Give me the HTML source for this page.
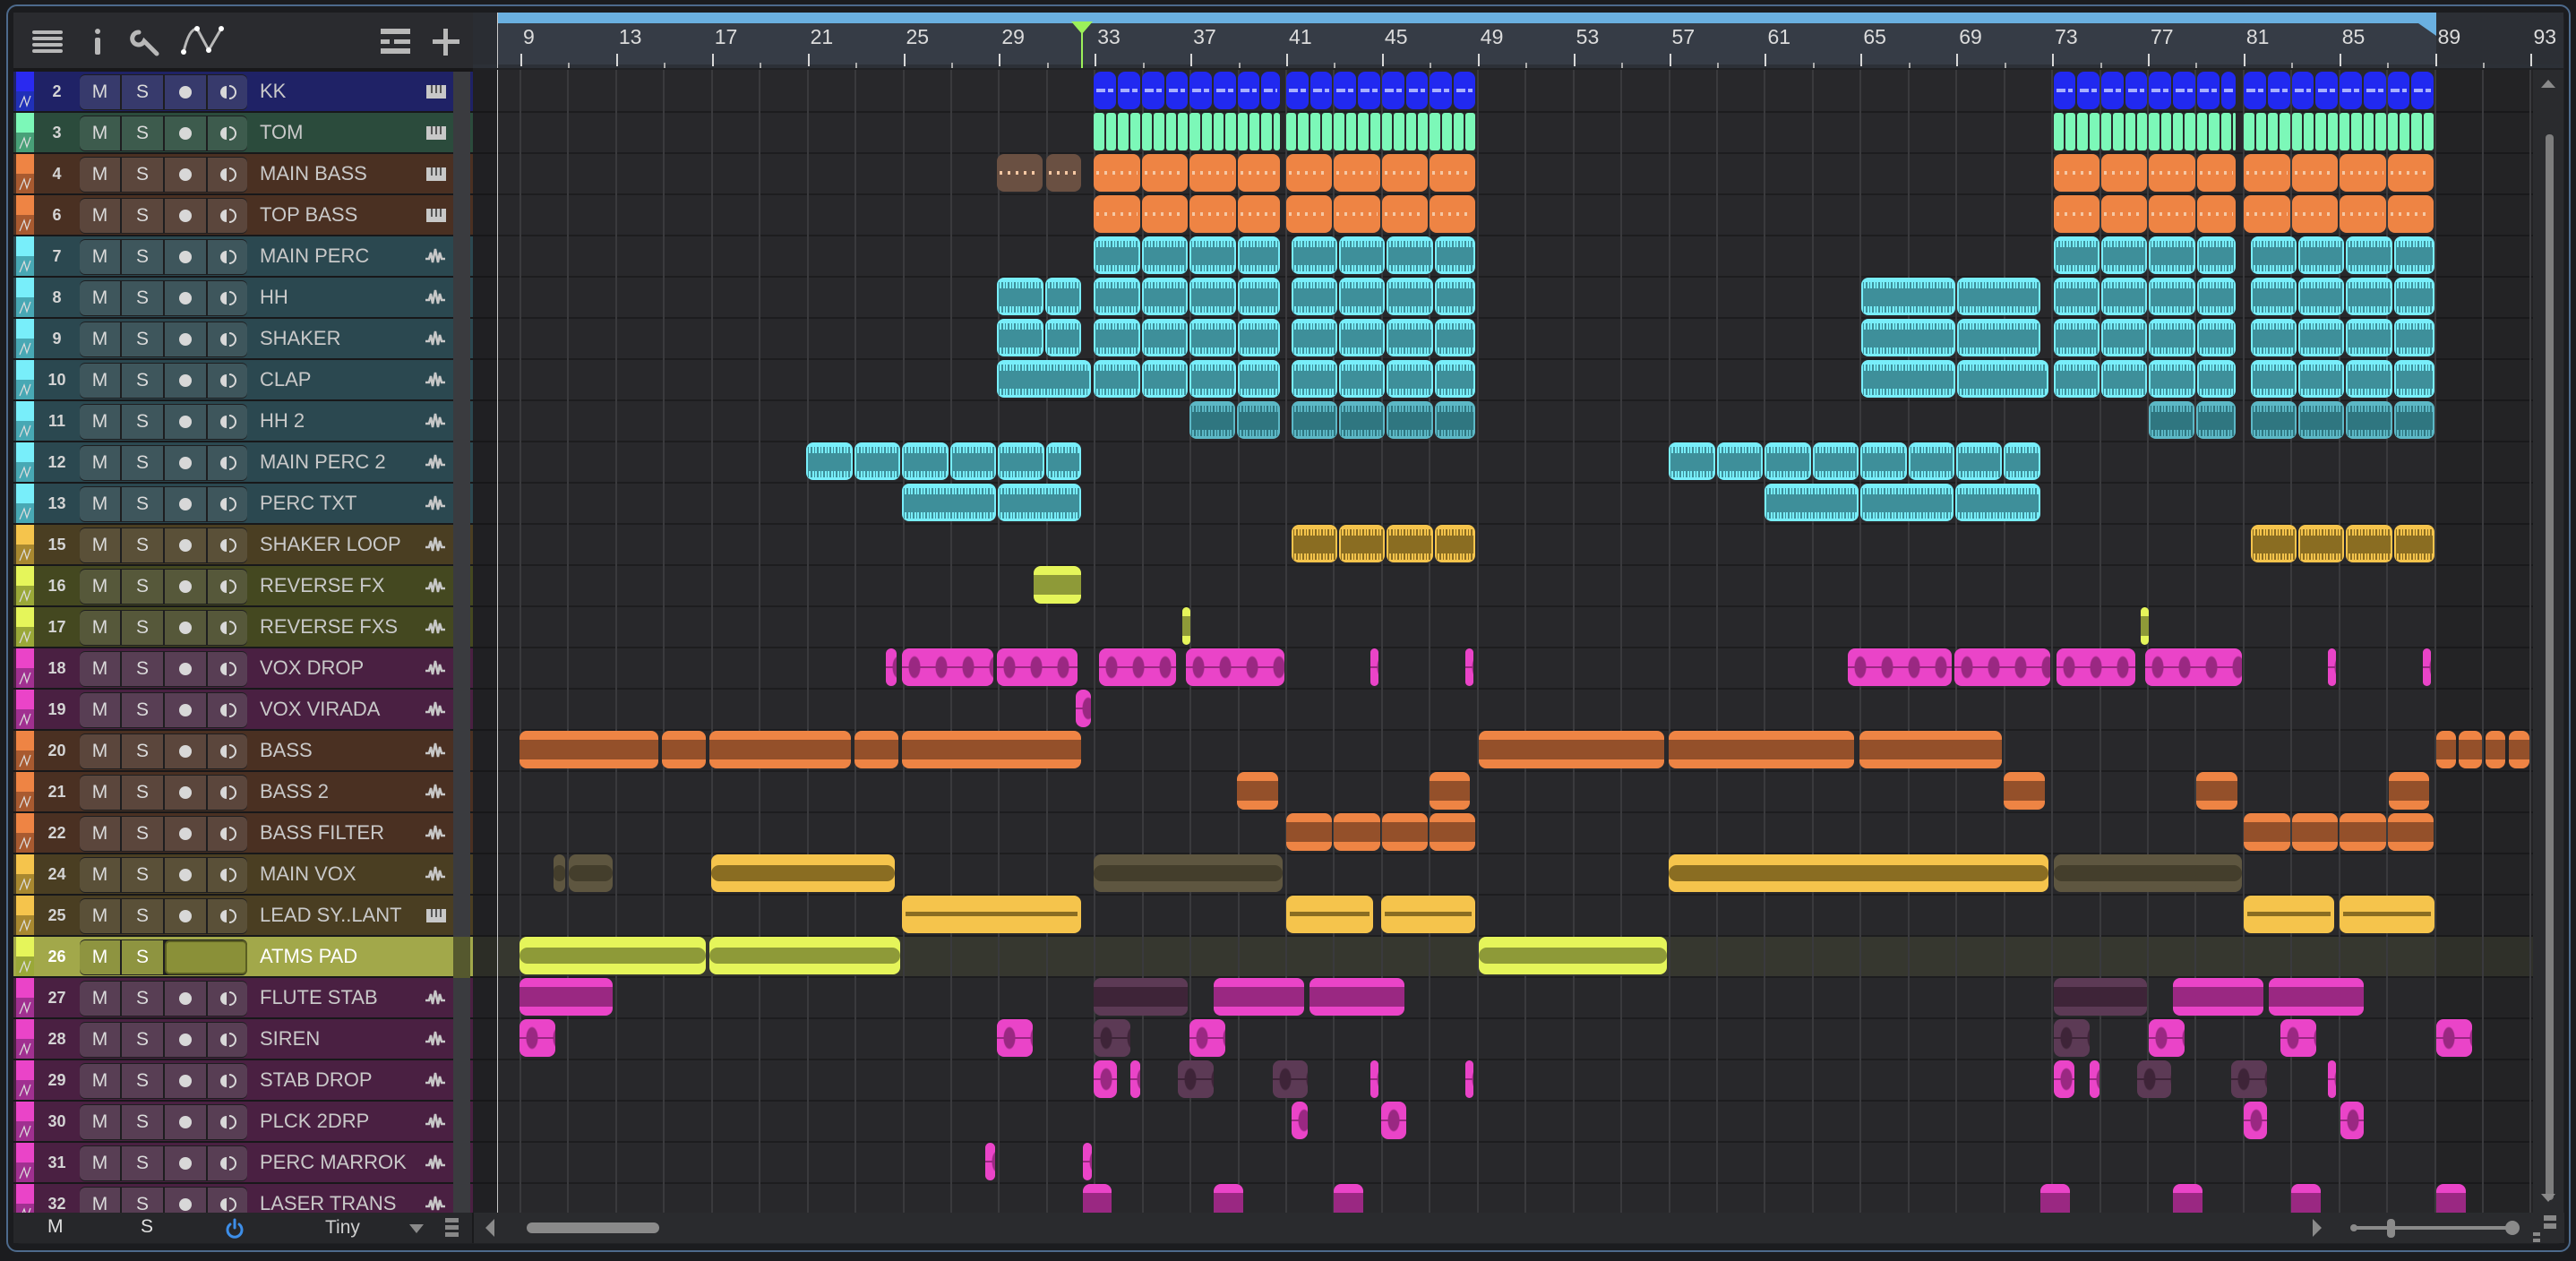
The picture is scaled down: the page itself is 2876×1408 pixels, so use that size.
<!DOCTYPE html>
<html><head><meta charset="utf-8">
<style>
*{margin:0;padding:0;box-sizing:border-box}
body{width:2876px;height:1408px;background:#1b1c1f;position:relative;overflow:hidden;font-family:"Liberation Sans",sans-serif}
.abs{position:absolute}
#frame{left:7px;top:5px;width:2863px;height:1393px;border:2px solid #4d6a8c;border-radius:12px}
#panel{left:15px;top:14px;width:2848px;height:1375px;background:#202124;border-radius:8px;overflow:hidden}
#toolbar{left:15px;top:14px;width:513px;height:62px;background:#2a2b2f}
#ruler{left:528px;top:14px;width:2334px;height:62px;background:#363c46;overflow:hidden}
.rn{position:absolute;top:14px;font-size:23px;color:#dcdcdc}
.tk{position:absolute;width:2px;background:#d8d8d8}
#tl{left:528px;top:78px;width:2300px;height:1276px;background:#28282b;overflow:hidden}
.row{position:absolute;left:0;width:2300px;height:46px;border-bottom:2px solid #1d1d1f}
.gl{position:absolute;top:0;width:2px;height:1276px;background:#3a3a3d}
.clip{position:absolute;height:42px;overflow:hidden}
.lrow{position:absolute;left:15px;width:513px;height:46px;border-bottom:2px solid #18181a}
.lrow div{position:absolute}
.btn{top:4px;height:38px;color:#dadada;font-size:21px;text-align:center;line-height:38px}
.nm{left:261px;top:0;width:230px;height:44px;font-size:22px;color:#c9c9c9;line-height:44px;padding-left:14px;white-space:nowrap}
.num{left:23px;top:0;width:51px;height:44px;font-size:18px;font-weight:bold;color:#d4d4d4;text-align:center;line-height:44px}
#bottom{left:15px;top:1354px;width:2848px;height:34px;background:#2a2b2e}
</style></head><body>
<div id="frame" class="abs"></div>
<div id="panel" class="abs"></div>
<div id="toolbar" class="abs">
 <svg width="513" height="62" class="abs" style="left:0;top:0">
  <g fill="#b8b8b8">
   <rect x="21" y="20" width="34" height="4" rx="2"/><rect x="21" y="27" width="34" height="4" rx="2"/><rect x="21" y="34" width="34" height="4" rx="2"/><rect x="21" y="41" width="34" height="4" rx="2"/>
   <rect x="91" y="18" width="6" height="6" rx="3"/><rect x="91" y="28" width="6" height="19" rx="2"/>
   <rect x="410" y="18" width="33" height="6"/><rect x="410" y="30" width="10" height="5"/><rect x="425" y="30" width="18" height="5"/><rect x="410" y="40" width="33" height="6"/>
   <rect x="468" y="30" width="30" height="5"/><rect x="480" y="18" width="5" height="30"/>
  </g>
  <path d="M140 22 a7 7 0 1 0 6 10 l14 14" stroke="#b8b8b8" stroke-width="5" fill="none" stroke-linecap="round"/>
  <path d="M190 44 Q196 18 205 18 L218 42 L232 18" stroke="#b8b8b8" stroke-width="3" fill="none"/>
  <g fill="#fff"><circle cx="190" cy="44" r="3"/><circle cx="205" cy="18" r="3"/><circle cx="218" cy="42" r="3"/><circle cx="232" cy="18" r="3"/></g>
 </svg>
</div>
<div class="abs" style="left:15px;top:76px;width:513px;height:4px;background:#18181a"></div>
<div id="ruler" class="abs"></div>
<div id="tl" class="abs"></div>
<div id="left"></div>
<div class="abs" style="left:2828px;top:78px;width:34px;height:1276px;background:#2a2b2e"></div>
<svg class="abs" style="left:2828px;top:78px" width="34" height="1276">
 <path d="M9 20 L17 11 L25 20Z" fill="#8a8a8a"/>
 <rect x="14" y="72" width="9" height="1190" rx="4" fill="#7d7d7d"/>
 <path d="M9 1255 L17 1264 L25 1255Z" fill="#8a8a8a"/>
</svg>
<div id="bottom" class="abs">
 <div class="abs" style="left:0;width:512px;height:34px;background:#26272a"></div>
 <div class="abs" style="left:38px;top:4px;font-size:21px;color:#e0e0e0">M</div>
 <div class="abs" style="left:142px;top:4px;font-size:21px;color:#e0e0e0">S</div>
 <svg class="abs" style="left:235px;top:5px" width="24" height="24"><path d="M7 8 A8 8 0 1 0 17 8" stroke="#3d8ee8" stroke-width="3" fill="none" stroke-linecap="round"/><line x1="12" y1="3" x2="12" y2="12" stroke="#3d8ee8" stroke-width="3" stroke-linecap="round"/></svg>
 <div class="abs" style="left:348px;top:5px;font-size:21px;color:#d0d0d0">Tiny</div>
 <svg class="abs" style="left:440px;top:11px" width="20" height="14"><path d="M2 2 L18 2 L10 12Z" fill="#8a8a8a"/></svg>
 <svg class="abs" style="left:482px;top:6px" width="16" height="24"><rect x="0" y="0" width="15" height="5" fill="#888"/><rect x="0" y="8" width="15" height="5" fill="#888"/><rect x="0" y="16" width="15" height="5" fill="#888"/></svg>
 <div class="abs" style="left:512px;width:2px;height:34px;background:#1a1a1c"></div>
 <svg class="abs" style="left:525px;top:6px" width="14" height="22"><path d="M12 1 L2 11 L12 21Z" fill="#8a8a8a"/></svg>
 <div class="abs" style="left:573px;top:11px;width:148px;height:12px;border-radius:6px;background:#8a8a8a"></div>
 <svg class="abs" style="left:2565px;top:6px" width="14" height="22"><path d="M2 1 L12 11 L2 21Z" fill="#8a8a8a"/></svg>
 <svg class="abs" style="left:2605px;top:3px" width="240" height="30">
  <circle cx="8" cy="14" r="4" fill="#8a8a8a"/><rect x="8" y="12" width="180" height="4" fill="#8a8a8a"/>
  <rect x="45" y="4" width="9" height="21" rx="4" fill="#8a8a8a"/><circle cx="185" cy="14" r="8" fill="#8a8a8a"/>
  <rect x="220" y="0" width="14" height="6" fill="#888"/><rect x="220" y="9" width="14" height="6" fill="#888"/>
  <rect x="208" y="19" width="8" height="4" fill="#888"/><rect x="208" y="26" width="8" height="4" fill="#888"/>
 </svg>
</div>
<script>
var S=1.834, BX=581, BW=26.72;
function bx(b){return BX+(b-9)*BW;}
var r=document.getElementById('ruler'),h='';
h+='<div class="abs" style="left:0;top:0;width:27px;height:62px;background:#2a2d33"></div>';
h+='<div class="abs" style="left:'+(2720-528)+'px;top:0;width:200px;height:62px;background:#2c2f35"></div>';
h+='<div class="abs" style="left:27px;top:0;width:'+(2720-555)+'px;height:12px;background:#6ab0e0"></div>';
h+='<svg class="abs" style="left:'+(2720-528-20)+'px;top:12px" width="20" height="14"><path d="M0 0 L20 0 L20 14Z" fill="#6ab0e0"/></svg>';
h+='<div class="abs" style="left:0;top:58px;width:2334px;height:4px;background:#2c3037"></div>';
for(var b=9;b<=95;b+=2){var x=bx(b)-528;if((b-9)%4==0){h+='<div class="tk" style="left:'+x+'px;top:46px;height:14px"></div><div class="rn" style="left:'+(x+3)+'px">'+b+'</div>';}else{h+='<div class="tk" style="left:'+x+'px;top:56px;height:6px;background:#aaa"></div>';}}
h+='<div class="abs" style="left:27px;top:0;width:1px;height:62px;background:#ccc"></div>';
h+='<svg class="abs" style="left:'+(1208-528-12)+'px;top:10px" width="24" height="52"><path d="M0 0 L24 0 L12 14Z" fill="#9cf05a"/><rect x="11" y="6" width="2" height="46" fill="#9cf05a"/></svg>';
r.innerHTML=h;
var rows=[
['2','KK','#2a2af0','#2030b8','#1f2266','#373a6c','p'],
['3','TOM','#7cf8b8','#48a078','#2b4b3c','#3d5b4d','p'],
['4','MAIN BASS','#ee8444','#a85a30','#4a3022','#5b463c','p'],
['6','TOP BASS','#ee8444','#a85a30','#4a3022','#5b463c','p'],
['7','MAIN PERC','#78eefa','#48a8b4','#2b4850','#3e565c','w'],
['8','HH','#78eefa','#48a8b4','#2b4850','#3e565c','w'],
['9','SHAKER','#78eefa','#48a8b4','#2b4850','#3e565c','w'],
['10','CLAP','#78eefa','#48a8b4','#2b4850','#3e565c','w'],
['11','HH 2','#78eefa','#48a8b4','#2b4850','#3e565c','w'],
['12','MAIN PERC 2','#78eefa','#48a8b4','#2b4850','#3e565c','w'],
['13','PERC TXT','#78eefa','#48a8b4','#2b4850','#3e565c','w'],
['15','SHAKER LOOP','#f5c44c','#a88830','#4a3e22','#5a5038','w'],
['16','REVERSE FX','#e5f55a','#9aa838','#444820','#56583a','w'],
['17','REVERSE FXS','#e5f55a','#9aa838','#444820','#56583a','w'],
['18','VOX DROP','#ea44c8','#a03090','#4a2042','#583e54','w'],
['19','VOX VIRADA','#ea44c8','#a03090','#4a2042','#583e54','w'],
['20','BASS','#ee8444','#a85a30','#4a3022','#5b463c','w'],
['21','BASS 2','#ee8444','#a85a30','#4a3022','#5b463c','w'],
['22','BASS FILTER','#ee8444','#a85a30','#4a3022','#5b463c','w'],
['24','MAIN VOX','#f5c44c','#a88830','#4a3e22','#5a5038','w'],
['25','LEAD SY..LANT','#f5c44c','#a88830','#4a3e22','#5a5038','p'],
['26','ATMS PAD','#e5f55a','#9aa838','#a2a84a','#8e9440','s'],
['27','FLUTE STAB','#ea44c8','#a03090','#4a2042','#583e54','w'],
['28','SIREN','#ea44c8','#a03090','#4a2042','#583e54','w'],
['29','STAB DROP','#ea44c8','#a03090','#4a2042','#583e54','w'],
['30','PLCK 2DRP','#ea44c8','#a03090','#4a2042','#583e54','w'],
['31','PERC MARROK','#ea44c8','#a03090','#4a2042','#583e54','w'],
['32','LASER TRANS','#ea44c8','#a03090','#4a2042','#583e54','w']];
var L='',T='';
var piano='<svg width="22" height="18"><rect x="0" y="2" width="22" height="15" fill="#c8c8c8"/><g fill="#555"><rect x="5" y="2" width="2" height="9"/><rect x="10" y="2" width="2" height="9"/><rect x="15" y="2" width="2" height="9"/></g></svg>';
var wave='<svg width="24" height="20"><path d="M1 13 L5 13 L7 6 L9 17 L12 2 L15 17 L17 6 L19 13 L23 13" stroke="#c8c8c8" stroke-width="2.5" fill="none"/></svg>';
var recG='<svg width="20" height="20" style="vertical-align:middle"><circle cx="10" cy="10" r="7" fill="#d8d8d8"/></svg>';
var monG='<svg width="20" height="20" style="vertical-align:middle"><path d="M9 3 A7 7 0 0 0 9 17Z" fill="#d8d8d8"/><path d="M12 3 A7 7 0 0 1 12 17" stroke="#d8d8d8" stroke-width="2" fill="none"/></svg>';
rows.forEach(function(R,i){
 var y=80+i*46, sel=R[6]=='s';
 L+='<div class="lrow" style="top:'+y+'px;background:'+R[4]+'">';
 L+='<div style="left:3px;top:0;width:20px;height:22px;background:'+R[2]+'"></div>';
 L+='<div style="left:3px;top:22px;width:20px;height:22px;background:'+R[3]+'"><svg width="20" height="22"><path d="M4 18 L9 6 L12 16 L16 5" stroke="#ddd" stroke-width="1.2" fill="none"/></svg></div>';
 L+='<div class="num"'+(sel?' style="color:#fff"':'')+'>'+R[0]+'</div>';
 var bb=R[5];
 L+='<div style="left:74px;top:3px;width:187px;height:40px;border-radius:6px;background:#1e1e20"></div>';
 var cells=[[74,45,'M'],[121,46,'S'],[169,46,recG],[217,44,monG]];
 cells.forEach(function(c,k){
   if(sel&&k>=2){ if(k==2)L+='<div class="btn" style="left:169px;width:92px;background:#8a9038;border:2px solid #5a5e22;border-radius:5px"></div>'; return;}
   L+='<div class="btn" style="left:'+c[0]+'px;width:'+c[1]+'px;background:'+bb+';'+(k==0?'border-radius:6px 0 0 6px;':'')+(k==3?'border-radius:0 6px 6px 0;':'')+(sel?'color:#fff;':'')+'">'+c[2]+'</div>';
 });
 L+='<div class="nm" style="background:'+R[4]+';'+(sel?'color:#fff;':'')+'">'+R[1]+'</div>';
 if(R[6]!='s') L+='<div style="left:'+(R[6]=='p'?461:459)+'px;top:'+(R[6]=='p'?13:12)+'px">'+(R[6]=='p'?piano:wave)+'</div>';
 L+='<div style="left:491px;top:0;width:19px;height:46px;background:'+(sel?'#55582e':'#3a3b3f')+'"></div>';
 L+='</div>';
 T+='<div class="row" style="top:'+(y-78)+'px;background:'+(sel?'#36372f':'#28282b')+'"></div>';
});
document.getElementById('left').innerHTML=L;
var t='';
t+='<div class="abs" style="left:0;top:0;width:27px;height:1276px;background:rgba(0,0,0,0.18)"></div>';
t+='<div class="abs" style="left:'+(2720-528)+'px;top:0;width:200px;height:1276px;background:rgba(0,0,0,0.12)"></div>';
for(var b=9;b<=95;b+=2){t+='<div class="gl" style="left:'+(bx(b)-528-1)+'px"></div>';}
t+='<div class="gl" style="left:27px;background:#c8c8c8;width:1px"></div>';
var C={kk:['#2129f0','#a8b0ff'],tom:['#7cf8b8','#7cf8b8'],or:['#ee8444','#94502a'],cy:['#78eefa','#3e8f9a'],h2:['#5cb8c6','#2f7680'],go:['#f5c44c','#8a6d22'],yg:['#e5f55a','#8e9a38'],pk:['#ea44c8','#9a2882'],fo:['#6a5042','#8a6a58'],fg:['#5e5640','#443e2c'],fp:['#5c3a55','#3e2438'],fc:['#4a5c60','#324044']};
function clip(row,x1,x2,c,kind,seg){
 var X1=x1*S-528,X2=x2*S-528,y=row*46+2;
 var segs=[];
 if(seg){var sw=seg*BW;for(var a=X1;a<X2-3;a+=sw){segs.push([a,Math.min(a+sw,X2)]);}}else segs=[[X1,X2]];
 segs.forEach(function(s){
  var w=s[1]-s[0]-2, col=C[c], rad=kind=='tom'?3:8, inner='';
  if(kind=='kk') inner='<div class="abs" style="left:3px;right:3px;top:19px;height:4px;background:repeating-linear-gradient(90deg,'+col[1]+' 0 10px,transparent 10px 13px)"></div>';
  else if(kind=='dot') inner='<div class="abs" style="left:3px;right:3px;top:19px;height:4px;background:repeating-linear-gradient(90deg,#f6c8a4 0 3px,transparent 3px 9px)"></div>';
  else if(kind=='dense') inner='<div class="abs" style="left:2px;right:2px;top:5px;height:34px;background:repeating-linear-gradient(90deg,'+col[1]+' 0 1px,transparent 1px 3px,'+col[1]+' 3px 5px,transparent 5px 7px)"></div><div class="abs" style="left:2px;right:2px;top:12px;height:20px;background:'+col[1]+'"></div>';
  else if(kind=='band') inner='<div class="abs" style="left:0;right:0;top:10px;height:22px;background:'+col[1]+'"></div>';
  else if(kind=='line') inner='<div class="abs" style="left:4px;right:4px;top:18px;height:5px;background:'+col[1]+'"></div>';
  else if(kind=='blip') inner='<div class="abs" style="left:0;right:0;top:20px;height:2px;background:'+col[1]+'"></div><div class="abs" style="left:0;right:0;top:8px;height:26px;background:radial-gradient(ellipse 7px 13px at 14px 13px,'+col[1]+' 0 6px,transparent 7px);background-size:30px 26px"></div>';
  else if(kind=='wv') inner='<div class="abs" style="left:0;right:0;top:12px;height:18px;border-radius:9px;background:'+col[1]+'"></div>';
  t+='<div class="clip" style="left:'+s[0]+'px;top:'+y+'px;width:'+w+'px;background:'+col[0]+';border-radius:'+rad+'px">'+inner+'</div>';
 });
}
var A=[[666,780],[783,899],[1250,1362],[1366,1483]];
A.forEach(function(a){clip(0,a[0],a[1],'kk','kk',1);clip(1,a[0],a[1],'tom','tom',0.5);clip(2,a[0],a[1],'or','dot',2);clip(3,a[0],a[1],'or','dot',2);});
clip(2,607,636,'fo','dot');clip(2,637,659,'fo','dot');
[[666,780],[786,899],[1250,1362],[1370,1483]].forEach(function(a){clip(4,a[0],a[1],'cy','dense',2);clip(5,a[0],a[1],'cy','dense',2);clip(6,a[0],a[1],'cy','dense',2);clip(7,a[0],a[1],'cy','dense',2);});
[5,6,7].forEach(function(r){clip(r,607,r==7?665:659,'cy','dense',r==7?4:2);clip(r,1133,r==7?1248:1243,'cy','dense',4);});
clip(8,724,780,'h2','dense',2);clip(8,786,899,'h2','dense',2);clip(8,1308,1362,'h2','dense',2);clip(8,1370,1483,'h2','dense',2);
clip(9,491,659,'cy','dense',2);clip(9,1016,1243,'cy','dense',2);
clip(10,549,659,'cy','dense',4);clip(10,1074,1243,'cy','dense',4);
clip(11,786,899,'go','dense',2);clip(11,1370,1483,'go','dense',2);
clip(12,629,659,'yg','band');clip(13,720,726,'yg','band');clip(13,1303,1309,'yg','band');
[[539,547],[549,606],[607,657],[669,717],[722,783],[834,840],[892,898],[1125,1189],[1190,1249],[1252,1301],[1306,1366],[1417,1423],[1475,1481]].forEach(function(a){clip(14,a[0],a[1],'pk','blip');});
clip(15,655,665,'pk','blip');
[[316,402],[403,431],[432,519],[520,548],[549,659],[900,1014],[1016,1130],[1132,1220],[1483,1496],[1497,1512],[1513,1526],[1527,1541]].forEach(function(a){clip(16,a[0],a[1],'or','band');});
[[753,779],[870,896],[1220,1246],[1337,1363],[1454,1480]].forEach(function(a){clip(17,a[0],a[1],'or','band');});
clip(18,783,899,'or','band',2);clip(18,1366,1483,'or','band',2);
clip(19,337,345,'fg','wv');clip(19,346,374,'fg','wv');clip(19,433,546,'go','wv');clip(19,666,782,'fg','wv');clip(19,1016,1248,'go','wv');clip(19,1250,1366,'fg','wv');
[[549,659],[783,837],[841,899],[1366,1422],[1424,1483]].forEach(function(a){clip(20,a[0],a[1],'go','line');});
clip(21,316,431,'yg','wv');clip(21,432,549,'yg','wv');clip(21,900,1016,'yg','wv');
clip(22,316,374,'pk','band');clip(22,666,724,'fp','band');clip(22,739,795,'pk','band');clip(22,797,856,'pk','band');clip(22,1250,1308,'fp','band');clip(22,1323,1379,'pk','band');clip(22,1381,1440,'pk','band');
[[316,339,'pk'],[607,630,'pk'],[666,689,'fp'],[724,747,'pk'],[1250,1273,'fp'],[1308,1331,'pk'],[1388,1411,'pk'],[1483,1506,'pk']].forEach(function(a){clip(23,a[0],a[1],a[2],'blip');});
[[666,681,'pk'],[688,695,'pk'],[717,740,'fp'],[775,797,'fp'],[834,840,'pk'],[892,898,'pk'],[1250,1264,'pk'],[1272,1279,'pk'],[1301,1323,'fp'],[1358,1381,'fp'],[1417,1423,'pk']].forEach(function(a){clip(24,a[0],a[1],a[2],'blip');});
[[786,797],[841,857],[1366,1381],[1425,1440]].forEach(function(a){clip(25,a[0],a[1],'pk','blip');});
clip(26,600,607,'pk','blip');clip(26,659,666,'pk','blip');
[[659,678],[739,758],[812,831],[1242,1261],[1323,1342],[1395,1414],[1483,1502]].forEach(function(a){clip(27,a[0],a[1],'pk','band');});
document.getElementById('tl').innerHTML=T+t;
</script>
</body></html>
